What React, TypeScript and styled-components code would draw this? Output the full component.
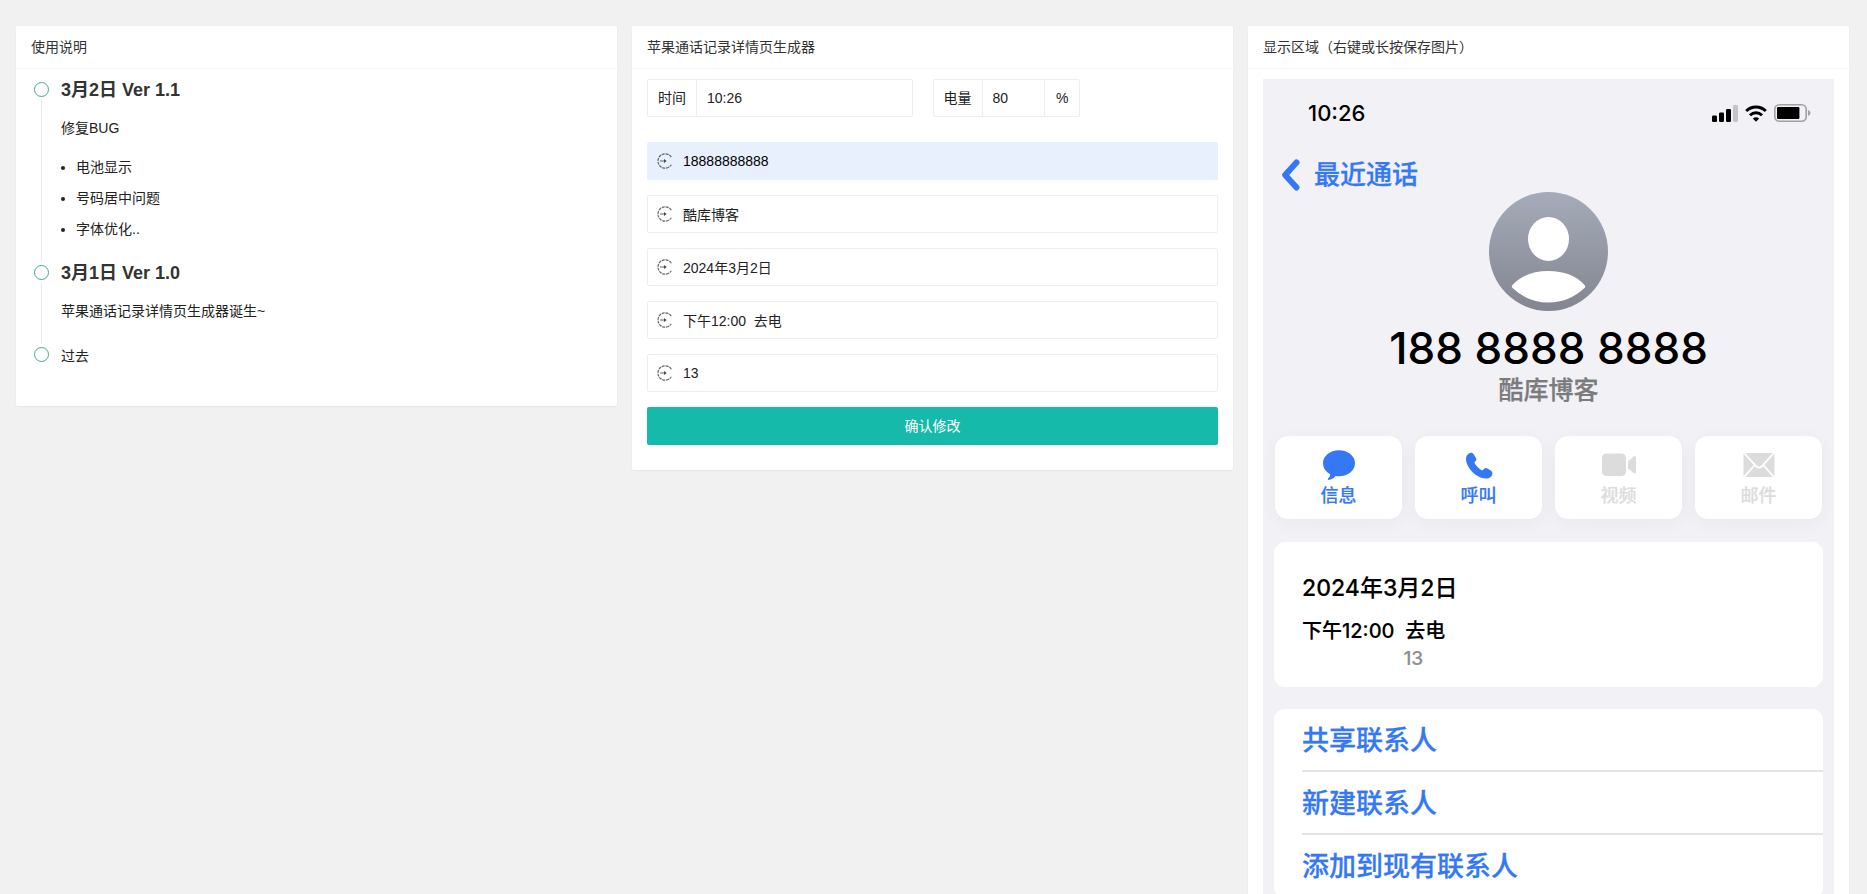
import React, { useState } from "react";
import styled, { createGlobalStyle } from "styled-components";

const ui = `"Liberation Sans", "Noto Sans CJK SC", sans-serif`;
const ios = `Inter, "Noto Sans CJK SC", sans-serif`;
const blue = "#3478f6";

const GlobalStyle = createGlobalStyle`
  * { box-sizing: border-box; }
  body {
    margin: 0;
    background: #f1f1f1;
    color: #222;
    font: 14px/24px ${ui};
  }
  button, input { font: inherit; color: inherit; }
`;

const Page = styled.main`
  display: grid;
  grid-template-columns: repeat(3, minmax(0, 1fr));
  align-items: start;
  gap: 15px;
  padding: 26px 18px 15px 16px;
`;

const Card = styled.section`
  background: #fff;
  border-radius: 2px;
  box-shadow: 0 1px 2px rgba(0, 0, 0, 0.05);
`;

const CardHeader = styled.h2`
  margin: 0;
  padding: 0 15px;
  border-bottom: 1px solid #f8f8f8;
  color: #333;
  font-size: 14px;
  font-weight: 400;
  line-height: 42px;
`;

const CardBody = styled.div`
  padding: 10px 15px 17px;
`;

const Timeline = styled.ul`
  margin: 0;
  padding: 0;
  list-style: none;
`;

const TimelineItem = styled.li`
  display: flex;
  gap: 9px;
`;

const Axis = styled.div`
  display: flex;
  flex-direction: column;
  align-items: center;
  width: 21px;
`;

const Dot = styled.span`
  width: 15px;
  height: 15px;
  margin: 3px 0 2px;
  border: 1px solid #3fae88;
  border-radius: 50%;
`;

const AxisLine = styled.span`
  flex: 1;
  width: 1px;
  background: #eaeaea;
`;

const TimelineContent = styled.div`
  padding-bottom: 17px;
`;

const TimelineTitle = styled.h3`
  margin: 0 0 15px;
  color: #333;
  font-size: 18px;
  line-height: 22px;
`;

const Paragraph = styled.p`
  margin: 0 0 4px;
`;

const Bullets = styled.ul`
  margin: 12px 0 0;
  padding-left: 15px;
  list-style: disc;
  line-height: 31px;
`;

const Form = styled.form`
  display: flex;
  flex-direction: column;
  gap: 15px;
  padding-bottom: 8px;
`;

const InlineFields = styled.div`
  display: grid;
  grid-template-columns: 1fr 1fr;
  margin-bottom: 10px;
`;

const FieldCell = styled.div`
  padding-right: 20px;
`;

const Group = styled.div<{ $width?: string }>`
  display: flex;
  width: ${(p) => p.$width ?? "100%"};
  height: 38px;
  border: 1px solid #eee;
  border-radius: 2px;
  line-height: 36px;
`;

const Prefix = styled.label`
  padding: 0 10px;
  border-right: 1px solid #eee;
  white-space: nowrap;
`;

const Suffix = styled.span`
  flex: none;
  padding: 0 10px 0 11px;
  border-left: 1px solid #eee;
`;

const GroupInput = styled.input`
  flex: 1;
  min-width: 0;
  padding: 0 10px;
  border: 0;
  background: transparent;
  outline: none;
`;

const IconField = styled.label<{ $filled?: boolean }>`
  display: flex;
  align-items: center;
  gap: 10px;
  height: 38px;
  padding-left: 9px;
  border: 1px solid ${(p) => (p.$filled ? "#e8f0fe" : "#eee")};
  border-radius: 2px;
  background: ${(p) => (p.$filled ? "#e8f0fe" : "#fff")};
  color: ${(p) => (p.$filled ? "#000" : "#222")};
`;

const FieldInput = styled.input`
  flex: 1;
  min-width: 0;
  height: 36px;
  padding: 0;
  border: 0;
  background: transparent;
  outline: none;
`;

const Submit = styled.button`
  height: 38px;
  border: 0;
  border-radius: 2px;
  background: #16baaa;
  color: #fff;
  cursor: pointer;
`;

const Phone = styled.div`
  padding: 0 11px 24px;
  background: #f1f1f6;
  color: #000;
  font-family: ${ios};
`;

const StatusBar = styled.div`
  display: flex;
  justify-content: space-between;
  align-items: center;
  height: 68px;
  padding: 0 12px 0 34px;
  font-size: 22px;
  font-weight: 500;
`;

const StatusIcons = styled.div`
  display: flex;
  align-items: center;
  gap: 7px;
`;

const BackLink = styled.a`
  display: flex;
  align-items: center;
  gap: 14px;
  height: 45px;
  padding: 10px 0 0 7px;
  color: ${blue};
  font-size: 26px;
  font-weight: 500;
  line-height: 36px;
  text-decoration: none;
  -webkit-text-stroke: 0.01em;
`;

const Profile = styled.div`
  display: flex;
  flex-direction: column;
  align-items: center;
`;

const PhoneNumber = styled.div`
  margin-top: 13px;
  font-size: 44px;
  font-weight: 500;
  line-height: 48px;
  white-space: pre;
`;

const Owner = styled.div`
  color: #7b7b7e;
  font-size: 25px;
  font-weight: 500;
  line-height: 36px;
  -webkit-text-stroke: 0.01em;
`;

const Actions = styled.div`
  display: grid;
  grid-template-columns: repeat(4, 1fr);
  gap: 13px;
  margin: 28px 1px 23px;
`;

const Action = styled.button`
  display: flex;
  flex-direction: column;
  align-items: center;
  height: 83px;
  padding: 12px 0 0;
  border: 0;
  border-radius: 13px;
  background: #fff;
  box-shadow: 0 4px 20px rgba(0, 0, 40, 0.04);
  color: ${blue};
  font-size: 18px;
  font-weight: 500;
  line-height: 24px;
  -webkit-text-stroke: 0.01em;
  &:disabled { color: #dcdcdd; }
`;

const Panel = styled.div`
  margin-bottom: 22px;
  border-radius: 11px;
  background: #fff;
`;

const CallInfo = styled(Panel)`
  height: 145px;
  padding: 29px 28px 0;
  font-weight: 500;
  -webkit-text-stroke: 0.01em;
`;

const CallDate = styled.div`
  font-size: 23px;
  line-height: 34px;
`;

const CallRow = styled.div`
  display: inline-flex;
  flex-direction: column;
  padding-top: 12px;
  font-size: 20px;
  line-height: 28px;
  white-space: pre;
`;

const Duration = styled.span`
  align-self: flex-end;
  padding-right: 22px;
  color: #8e8e90;
  font-size: 19px;
`;

const ContactLinks = styled(Panel)`
  padding-left: 28px;
`;

const ContactLink = styled.a`
  display: block;
  height: 63px;
  border-bottom: 2px solid #e4e4e6;
  color: ${blue};
  font-size: 27px;
  font-weight: 500;
  line-height: 64px;
  text-decoration: none;
  -webkit-text-stroke: 0.01em;
  &:last-child { border-bottom: 0; }
`;

const FieldIcon = () => (
  <svg width="16" height="16" viewBox="0 0 16 16" fill="none" stroke="#666" aria-hidden="true">
    <path d="M14.3 4.2A7.2 7.2 0 1 0 14.3 11.8" strokeWidth="1.200" strokeDasharray="3 0.8" />
    <path d="M3 8H7.500" />
    <path d="M7 6L9.600 8L7 10Z" fill="#444" stroke="none" />
  </svg>
);

const Signal = () => (
  <svg width="26" height="17" viewBox="0 0 26 17" aria-hidden="true">
    <rect x="0" y="10.500" width="5" height="6.500" rx="1.200" />
    <rect x="7" y="7.500" width="5" height="9.500" rx="1.200" />
    <rect x="14" y="4" width="5" height="13" rx="1.200" />
    <rect x="21" y="0" width="5" height="17" rx="1.200" fill="#c5c5c9" />
  </svg>
);

const Wifi = () => (
  <svg width="22" height="17" viewBox="0 0 22 17" fill="none" stroke="#000" strokeWidth="3" aria-hidden="true">
    <path d="M1.200 6A14 14 0 0 1 20.800 6" />
    <path d="M5 10.200A8.600 8.600 0 0 1 17 10.200" />
    <path d="M11 16.800L7.900 13.600A4.500 4.500 0 0 1 14.100 13.600Z" fill="#000" stroke="none" />
  </svg>
);

const Battery = ({ level }: { level: number }) => (
  <svg width="37" height="18" viewBox="0 0 37 18" aria-hidden="true">
    <rect x="0.800" y="0.800" width="31.400" height="16.400" rx="4.500" fill="none" stroke="#a0a0a4" strokeWidth="1.600" />
    <rect x="3" y="3" width={(28 * level) / 100} height="12" rx="1" />
    <path d="M34 6Q36.500 7 36.500 9T34 12Z" fill="#a0a0a4" />
  </svg>
);

const Chevron = () => (
  <svg width="19" height="32" viewBox="0 0 19 32" fill="none" stroke={blue} strokeWidth="6" strokeLinecap="round" strokeLinejoin="round" aria-hidden="true">
    <path d="M15.500 3.500L4.200 16L15.500 28.500" />
  </svg>
);

const Avatar = () => (
  <svg width="119" height="119" viewBox="0 0 119 119" aria-hidden="true">
    <defs>
      <linearGradient id="avatar" x1="0" y1="0" x2="0" y2="1">
        <stop offset="0" stopColor="#a5abb9" />
        <stop offset="1" stopColor="#838690" />
      </linearGradient>
    </defs>
    <circle cx="59.500" cy="59.500" r="59.500" fill="url(#avatar)" />
    <ellipse cx="59.500" cy="47" rx="20.500" ry="22" fill="#fff" />
    <path d="M23.500 93Q36 79 59.500 79T95.500 93Q97 94.500 95.500 96Q80 110.500 59.500 110.500T23.500 96Q22 94.500 23.500 93Z" fill="#fff" />
  </svg>
);

const MessageIcon = () => (
  <svg width="34" height="36" viewBox="0 0 34 36" fill="currentColor" aria-hidden="true">
    <path d="M17 2.200C26 2.200 33 7.800 33 15.200S26 28.200 17 28.200Q15.200 28.200 13.500 28Q10.500 31.800 6.500 31.900Q5.300 31.700 6 30.600Q8 28.800 8.300 26.300C4 23.800 1 20 1 15.200C1 7.800 8 2.200 17 2.200Z" />
  </svg>
);

const CallIcon = () => (
  <svg width="34" height="36" viewBox="0 0 34 36" fill="currentColor" aria-hidden="true">
    <path d="M8.500 4.800C6.500 5.200 4 7.500 4 11C4 19 14 30.500 24 30.500C27.500 30.500 30 28.500 30.300 26C30.500 24.500 30 23.500 29 22.800L25.500 20.500C24.300 19.700 23.200 19.800 22.200 20.800L21 22C20.500 22.500 20 22.500 19.300 22.100C17 20.800 14.500 18 12.800 15.500C12.300 14.800 12.400 14.300 12.900 13.800L13.800 12.800C14.600 11.900 14.500 10.900 13.900 9.900L11.700 6.300C10.900 5 9.800 4.500 8.500 4.800Z" />
  </svg>
);

const VideoIcon = () => (
  <svg width="34" height="36" viewBox="0 0 34 36" fill="currentColor" aria-hidden="true">
    <rect x="0" y="5.500" width="24" height="22.500" rx="4.500" />
    <path d="M26 13.500L31.500 8.500Q34 7 34 9.500V24Q34 26.500 31.500 25L26 20.500Z" />
  </svg>
);

const MailIcon = () => (
  <svg width="34" height="36" viewBox="0 0 34 36" aria-hidden="true">
    <rect x="1.500" y="5" width="31" height="24" rx="1.500" fill="currentColor" />
    <path d="M2 5L14.500 18.500Q17 20.800 19.500 18.500L32 5M2 29L12.800 17M32 29L21.200 17" fill="none" stroke="#fff" strokeWidth="1.800" />
  </svg>
);

const fieldNames = ["电话号码", "归属", "日期", "通话时间", "时长"];

export default function App() {
  const [time, setTime] = useState("10:26");
  const [battery, setBattery] = useState("80");
  const [fields, setFields] = useState(["18888888888", "酷库博客", "2024年3月2日", "下午12:00  去电", "13"]);
  const [number, owner, date, call, duration] = fields;

  return (
    <>
      <GlobalStyle />
      <Page>
        <Card>
          <CardHeader>使用说明</CardHeader>
          <CardBody>
            <Timeline>
              <TimelineItem>
                <Axis><Dot /><AxisLine /></Axis>
                <TimelineContent>
                  <TimelineTitle>3月2日 Ver 1.1</TimelineTitle>
                  <Paragraph>修复BUG</Paragraph>
                  <Bullets>
                    <li>电池显示</li>
                    <li>号码居中问题</li>
                    <li>字体优化..</li>
                  </Bullets>
                </TimelineContent>
              </TimelineItem>
              <TimelineItem>
                <Axis><Dot /><AxisLine /></Axis>
                <TimelineContent>
                  <TimelineTitle>3月1日 Ver 1.0</TimelineTitle>
                  <Paragraph>苹果通话记录详情页生成器诞生~</Paragraph>
                </TimelineContent>
              </TimelineItem>
              <TimelineItem>
                <Axis><Dot /></Axis>
                <TimelineContent>
                  <Paragraph>过去</Paragraph>
                </TimelineContent>
              </TimelineItem>
            </Timeline>
          </CardBody>
        </Card>

        <Card>
          <CardHeader>苹果通话记录详情页生成器</CardHeader>
          <CardBody>
            <Form onSubmit={(e) => e.preventDefault()}>
              <InlineFields>
                <FieldCell>
                  <Group>
                    <Prefix htmlFor="time">时间</Prefix>
                    <GroupInput id="time" value={time} onChange={(e) => setTime(e.target.value)} />
                  </Group>
                </FieldCell>
                <FieldCell>
                  <Group $width="147px">
                    <Prefix htmlFor="battery">电量</Prefix>
                    <GroupInput id="battery" value={battery} onChange={(e) => setBattery(e.target.value)} />
                    <Suffix>%</Suffix>
                  </Group>
                </FieldCell>
              </InlineFields>
              {fields.map((value, i) => (
                <IconField key={fieldNames[i]} $filled={i === 0}>
                  <FieldIcon />
                  <FieldInput
                    aria-label={fieldNames[i]}
                    value={value}
                    onChange={(e) => setFields(fields.map((f, j) => (j === i ? e.target.value : f)))}
                  />
                </IconField>
              ))}
              <Submit type="submit">确认修改</Submit>
            </Form>
          </CardBody>
        </Card>

        <Card>
          <CardHeader>显示区域（右键或长按保存图片）</CardHeader>
          <CardBody>
            <Phone>
              <StatusBar>
                <span>{time}</span>
                <StatusIcons>
                  <Signal />
                  <Wifi />
                  <Battery level={Math.min(100, parseInt(battery, 10) || 0)} />
                </StatusIcons>
              </StatusBar>
              <BackLink href="#"><Chevron />最近通话</BackLink>
              <Profile>
                <Avatar />
                <PhoneNumber>{number.replace(/^(\d{3})(\d{4})(\d{4})$/, "$1 $2 $3")}</PhoneNumber>
                <Owner>{owner}</Owner>
              </Profile>
              <Actions>
                <Action type="button"><MessageIcon />信息</Action>
                <Action type="button"><CallIcon />呼叫</Action>
                <Action type="button" disabled><VideoIcon />视频</Action>
                <Action type="button" disabled><MailIcon />邮件</Action>
              </Actions>
              <CallInfo>
                <CallDate>{date}</CallDate>
                <CallRow>
                  <span>{call}</span>
                  <Duration>{duration}</Duration>
                </CallRow>
              </CallInfo>
              <ContactLinks>
                <ContactLink href="#">共享联系人</ContactLink>
                <ContactLink href="#">新建联系人</ContactLink>
                <ContactLink href="#">添加到现有联系人</ContactLink>
              </ContactLinks>
            </Phone>
          </CardBody>
        </Card>
      </Page>
    </>
  );
}
